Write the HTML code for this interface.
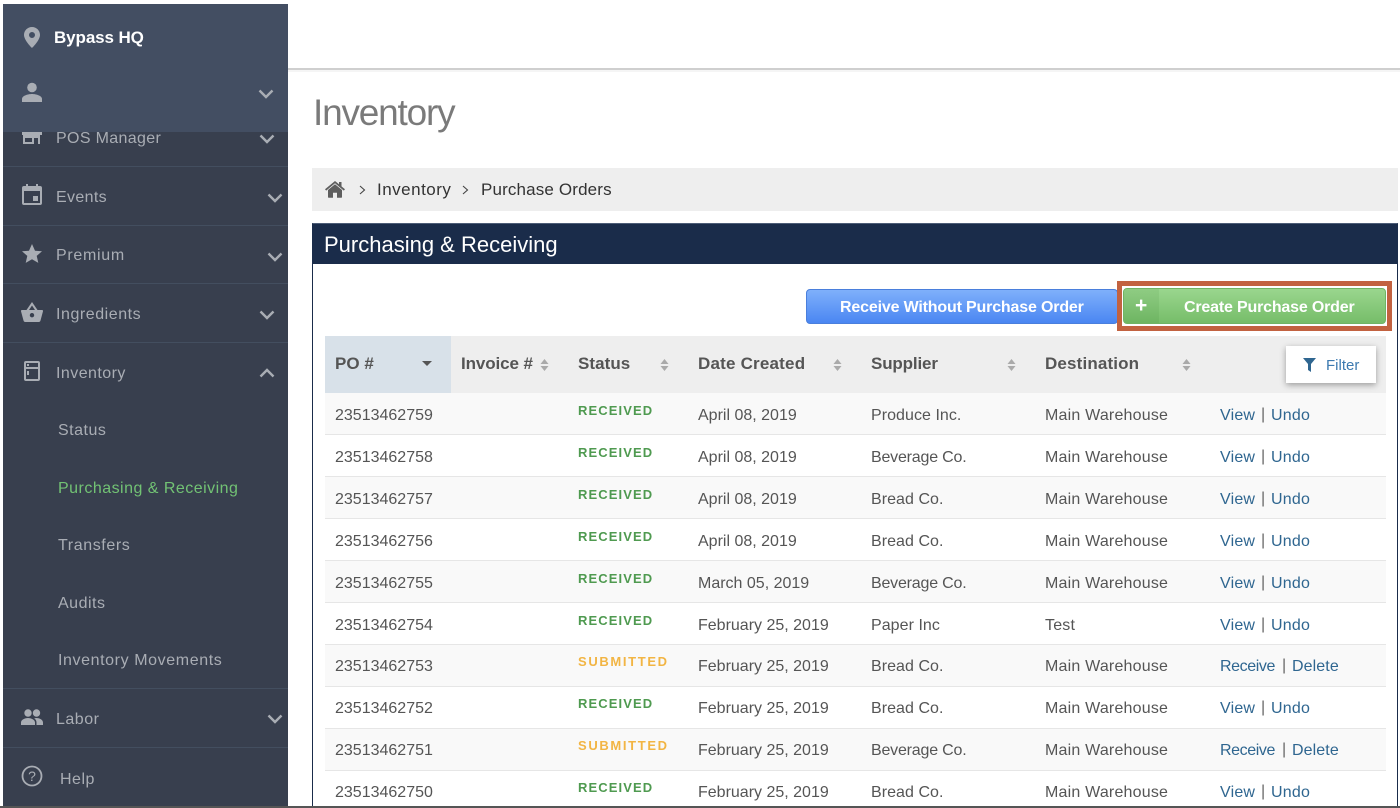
<!DOCTYPE html>
<html><head><meta charset="utf-8"><title>Inventory</title>
<style>
html,body{margin:0;padding:0;background:#fff;width:1400px;height:808px;overflow:hidden}
#p{position:relative;width:1400px;height:808px;overflow:hidden;font-family:"Liberation Sans",sans-serif;color:#555}
.a{position:absolute}
.t{position:absolute;white-space:nowrap;line-height:20px;height:20px}
.s{color:#a9adb4;font-size:16px;letter-spacing:.5px}
.sep{position:absolute;left:3px;width:285px;height:1px;background:#434e5f}
.i{position:absolute;fill:#a9adb4}
.c{position:absolute;fill:none;stroke:#a9adb4;stroke-width:2.4}
.row{position:absolute;left:325px;width:1061px;height:41px;border-bottom:1px solid #e6e6e6}
.odd{background:#f9f9f9}
.n{font-size:16px;color:#555;left:335px}
.dt{font-size:16px;color:#555;left:698px}
.su{font-size:16px;color:#555;left:871px;letter-spacing:.05px}
.de{font-size:16px;color:#555;left:1045px;letter-spacing:.2px}
.st{font-size:13px;font-weight:bold;left:578px}
.g{color:#4f9a50;letter-spacing:1.1px}.o{color:#f2b544;letter-spacing:1.65px}
.l{font-size:16px;color:#2f6690;letter-spacing:.2px}
.v{left:1220px}.u{left:1271px}.b{font-size:16px;color:#666;left:1261px}
.rc{left:1220px;letter-spacing:-.4px}.dl{left:1292px;letter-spacing:.1px}.b2{font-size:16px;color:#666;left:1282px}
.h{font-size:17px;font-weight:bold;color:#555;letter-spacing:.05px}
.ar{position:absolute;width:9px;height:14px}
</style></head><body><div id="p">

<!-- sidebar -->
<div class="a" style="left:3px;top:4px;width:285px;height:802px;background:#383f4e"></div>
<div class="t s" style="left:56px;top:129px;letter-spacing:.35px">POS Manager</div>
<svg class="i" style="left:22px;top:132px" width="20" height="14" viewBox="0 0 20 14"><path d="M0 0h20v3H18v9h-2V6h-4v6H1V3H0zM3 6v4h7V6z"/></svg>
<div class="a" style="left:3px;top:4px;width:285px;height:128px;background:#434e62"></div>
<svg class="i" style="left:24px;top:27px" width="16" height="21" viewBox="0 0 16 21"><path fill-rule="evenodd" d="M8 0C3.600 0 0 3.500 0 7.900 0 13.500 8 21 8 21s8-7.500 8-13.100C16 3.500 12.400 0 8 0zm0 5a3 3 0 1 1 0 6 3 3 0 0 1 0-6z"/></svg>
<div class="t" style="left:54px;top:28px;color:#fff;font-size:17px;font-weight:bold;letter-spacing:-.1px">Bypass HQ</div>
<svg class="i" style="left:22px;top:82px" width="20" height="20" viewBox="0 0 20 20"><circle cx="10" cy="5.500" r="4.800"/><path d="M0 20v-3c0-3.500 6.500-5 10-5s10 1.500 10 5v3z"/></svg>
<svg class="c" style="left:258px;top:88px" width="16" height="12" viewBox="0 0 16 12"><path d="M1.500 2.500 8 9l6.500-6.500"/></svg>
<svg class="c" style="left:259px;top:133px" width="16" height="12" viewBox="0 0 16 12"><path d="M1.500 2.500 8 9l6.500-6.500"/></svg>

<div class="sep" style="top:166px"></div>
<svg class="i" style="left:22px;top:184px" width="20" height="21" viewBox="0 0 20 21"><path fill-rule="evenodd" d="M4 0h2v2h8V0h2v2h2a2 2 0 0 1 2 2v15a2 2 0 0 1-2 2H2a2 2 0 0 1-2-2V4a2 2 0 0 1 2-2h2zM2 7v12h16V7zm9 5h5v5h-5z"/></svg>
<div class="t s" style="left:56px;top:188px;letter-spacing:.35px">Events</div>
<svg class="c" style="left:267px;top:192px" width="16" height="12" viewBox="0 0 16 12"><path d="M1.500 2.500 8 9l6.500-6.500"/></svg>

<div class="sep" style="top:225px"></div>
<svg class="i" style="left:22px;top:244px" width="20" height="19" viewBox="0 0 20 19"><path d="M10 0l3 6.700 7 .6-5.300 4.600 1.600 7L10 15.200 3.700 18.900l1.600-7L0 7.300l7-.6z"/></svg>
<div class="t s" style="left:56px;top:246px;letter-spacing:.7px">Premium</div>
<svg class="c" style="left:267px;top:251px" width="16" height="12" viewBox="0 0 16 12"><path d="M1.500 2.500 8 9l6.500-6.500"/></svg>

<div class="sep" style="top:283px"></div>
<svg class="i" style="left:21px;top:302px" width="22" height="20" viewBox="0 0 22 20"><path fill-rule="evenodd" d="M11 0l5.500 8H21a1 1 0 0 1 1 1.300L19.500 18.500a2 2 0 0 1-2 1.500h-13a2 2 0 0 1-2-1.500L0 9.300A1 1 0 0 1 1 8h4.500zm0 3.500L8 8h6zM11 11a2.200 2.200 0 1 0 0 4.400A2.200 2.200 0 0 0 11 11z"/></svg>
<div class="t s" style="left:56px;top:305px;letter-spacing:.55px">Ingredients</div>
<svg class="c" style="left:259px;top:309px" width="16" height="12" viewBox="0 0 16 12"><path d="M1.500 2.500 8 9l6.500-6.500"/></svg>

<div class="sep" style="top:342px"></div>
<svg class="i" style="left:24px;top:361px" width="16" height="20" viewBox="0 0 16 20"><path fill-rule="evenodd" d="M2 0h12a2 2 0 0 1 2 2v16a2 2 0 0 1-2 2H2a2 2 0 0 1-2-2V2a2 2 0 0 1 2-2zm0 2v4h12V2zm0 6v10h12V8zm1-5h2v2H3zm0 7h2v4H3z"/></svg>
<div class="t s" style="left:56px;top:364px;letter-spacing:.45px">Inventory</div>
<svg class="c" style="left:259px;top:367px" width="16" height="12" viewBox="0 0 16 12"><path d="M1.500 9.500 8 3l6.500 6.500"/></svg>

<div class="t s" style="left:58px;top:421px">Status</div>
<div class="t s" style="left:58px;top:479px;color:#72c274;letter-spacing:.48px">Purchasing &amp; Receiving</div>
<div class="t s" style="left:58px;top:536px;letter-spacing:.6px">Transfers</div>
<div class="t s" style="left:58px;top:594px;letter-spacing:.5px">Audits</div>
<div class="t s" style="left:58px;top:651px;letter-spacing:.6px">Inventory Movements</div>

<div class="sep" style="top:688px"></div>
<svg class="i" style="left:21px;top:709px" width="22" height="16" viewBox="0 0 22 16"><circle cx="7" cy="4" r="3.700"/><circle cx="15.500" cy="4" r="3.700"/><path d="M0 16v-2.500C0 10.500 4.500 9 7 9s7 1.500 7 4.500V16zM15.500 9c2.500 0 6.500 1.500 6.500 4.500V16h-6.500v-2.500c0-1.800-1-3.200-2.300-4.200.9-.2 1.700-.3 2.300-.3z"/></svg>
<div class="t s" style="left:56px;top:710px">Labor</div>
<svg class="c" style="left:267px;top:713px" width="16" height="12" viewBox="0 0 16 12"><path d="M1.500 2.500 8 9l6.500-6.500"/></svg>

<div class="sep" style="top:747px"></div>
<svg class="a" style="left:21px;top:765px" width="22" height="22" viewBox="0 0 22 22"><circle cx="11" cy="11" r="9.500" fill="none" stroke="#a9adb4" stroke-width="1.800"/><text x="11" y="16" text-anchor="middle" font-size="14" fill="#a9adb4" font-family="Liberation Sans">?</text></svg>
<div class="t s" style="left:60px;top:770px">Help</div>

<!-- top bar -->
<div class="a" style="left:288px;top:68px;width:1112px;height:2px;background:#cfcfcf"></div>
<div class="a" style="left:288px;top:70px;width:1112px;height:2px;background:#f5f5f5"></div>
<div class="t" style="left:313px;top:91px;height:44px;line-height:44px;font-size:37px;color:#7a7a7a;letter-spacing:-1.2px">Inventory</div>

<!-- breadcrumb -->
<div class="a" style="left:312px;top:168px;width:1086px;height:43px;background:#eee"></div>
<svg class="a" style="left:325px;top:181px" width="20" height="17" viewBox="0 0 20 17"><path fill="#5e5e5e" d="M10 3.200 3 9v7a.8.8 0 0 0 .8.800H8v-5h4v5h4.200A.8.8 0 0 0 17 16V9zM10 0 0 8.300l1.200 1.300L10 2.300l8.800 7.300L20 8.300 16.500 5.400V1h-2.500v2.300z"/></svg>
<svg class="a" style="left:359px;top:185px" width="7" height="10" viewBox="0 0 7 10"><path d="M1 1l4.500 4L1 9" fill="none" stroke="#444" stroke-width="1.100"/></svg>
<div class="t" style="left:377px;top:180px;font-size:17px;color:#333;letter-spacing:.5px">Inventory</div>
<svg class="a" style="left:462px;top:185px" width="7" height="10" viewBox="0 0 7 10"><path d="M1 1l4.500 4L1 9" fill="none" stroke="#444" stroke-width="1.100"/></svg>
<div class="t" style="left:481px;top:180px;font-size:17px;color:#333;letter-spacing:.15px">Purchase Orders</div>

<!-- panel -->
<div class="a" style="left:312px;top:223px;width:1086px;height:590px;box-sizing:border-box;border:1px solid #1a2c4a;border-top:1px solid #4d5d77"></div>
<div class="a" style="left:312px;top:224px;width:1086px;height:40px;background:#1a2c4a"></div>
<div class="t" style="left:324px;top:234px;font-size:22px;line-height:22px;color:#fff">Purchasing &amp; Receiving</div>

<!-- buttons -->
<div class="a" style="left:806px;top:289px;width:312px;height:35px;box-sizing:border-box;border:1px solid #4a7fdc;border-radius:4px;background:linear-gradient(#7fb0fb,#4a86f2)"></div>
<div class="t" style="left:840px;top:298px;font-size:16px;font-weight:bold;color:#fff;letter-spacing:-.17px">Receive Without Purchase Order</div>
<div class="a" style="left:1117px;top:281px;width:275px;height:50px;box-sizing:border-box;border:5px solid #c26240;background:#fff"></div>
<div class="a" style="left:1123px;top:288px;width:263px;height:36px;box-sizing:border-box;border:1px solid #70b465;border-radius:4px;background:linear-gradient(#9ad68e,#76bd69)"></div>
<div class="a" style="left:1124px;top:289px;width:35px;height:34px;border-radius:3px 0 0 3px;background:linear-gradient(#8fcc83,#6eb562)"></div>
<div class="t" style="left:1135px;top:296px;font-size:21px;font-weight:bold;color:#fff">+</div>
<div class="t" style="left:1184px;top:298px;font-size:16px;font-weight:bold;color:#fff;letter-spacing:-.18px">Create Purchase Order</div>

<!-- table header -->
<div class="a" style="left:325px;top:336px;width:1061px;height:57px;background:#eee"></div>
<div class="a" style="left:325px;top:336px;width:126px;height:57px;background:#d8e1e9"></div>
<div class="t h" style="left:335px;top:354px">PO #</div>
<svg class="a" style="left:422px;top:361px" width="10" height="5" viewBox="0 0 10 5"><path d="M0 0h10L5 5z" fill="#555"/></svg>
<div class="t h" style="left:461px;top:354px;letter-spacing:-.1px">Invoice #</div>
<svg class="ar" style="left:540px;top:358px" viewBox="0 0 9 14"><path d="M4.500 1 8.500 6h-8zM4.500 13 .5 8h8z" fill="#aaa"/></svg>
<div class="t h" style="left:578px;top:354px">Status</div>
<svg class="ar" style="left:660px;top:358px" viewBox="0 0 9 14"><path d="M4.500 1 8.500 6h-8zM4.500 13 .5 8h8z" fill="#aaa"/></svg>
<div class="t h" style="left:698px;top:354px;letter-spacing:.2px">Date Created</div>
<svg class="ar" style="left:833px;top:358px" viewBox="0 0 9 14"><path d="M4.500 1 8.500 6h-8zM4.500 13 .5 8h8z" fill="#aaa"/></svg>
<div class="t h" style="left:871px;top:354px;letter-spacing:-.15px">Supplier</div>
<svg class="ar" style="left:1007px;top:358px" viewBox="0 0 9 14"><path d="M4.500 1 8.500 6h-8zM4.500 13 .5 8h8z" fill="#aaa"/></svg>
<div class="t h" style="left:1045px;top:354px;letter-spacing:.15px">Destination</div>
<svg class="ar" style="left:1182px;top:358px" viewBox="0 0 9 14"><path d="M4.500 1 8.500 6h-8zM4.500 13 .5 8h8z" fill="#aaa"/></svg>

<div class="a" style="left:1286px;top:346px;width:90px;height:37px;background:#fff;box-shadow:0 2px 6px rgba(0,0,0,.35)"></div>
<svg class="a" style="left:1303px;top:358px" width="13" height="14" viewBox="0 0 13 14"><path d="M0 0h13L8 6v8L5 12V6z" fill="#2f6690"/></svg>
<div class="t" style="left:1326px;top:356px;font-size:15px;color:#3d7ab0">Filter</div>

<!-- rows -->
<div class="row odd" style="top:393px"></div>
<div class="row" style="top:435px"></div>
<div class="row odd" style="top:477px"></div>
<div class="row" style="top:519px"></div>
<div class="row odd" style="top:561px"></div>
<div class="row" style="top:603px"></div>
<div class="row odd" style="top:645px"></div>
<div class="row" style="top:687px"></div>
<div class="row odd" style="top:729px"></div>

<div class="t n" style="top:406px">23513462759</div><div class="t st g" style="top:401px">RECEIVED</div><div class="t dt" style="top:406px">April 08, 2019</div><div class="t su" style="top:406px">Produce Inc.</div><div class="t de" style="top:406px">Main Warehouse</div><div class="t l v" style="top:406px">View</div><div class="t b" style="top:405px">|</div><div class="t l u" style="top:406px">Undo</div>
<div class="t n" style="top:448px">23513462758</div><div class="t st g" style="top:443px">RECEIVED</div><div class="t dt" style="top:448px">April 08, 2019</div><div class="t su" style="top:448px;letter-spacing:-.2px">Beverage Co.</div><div class="t de" style="top:448px">Main Warehouse</div><div class="t l v" style="top:448px">View</div><div class="t b" style="top:447px">|</div><div class="t l u" style="top:448px">Undo</div>
<div class="t n" style="top:490px">23513462757</div><div class="t st g" style="top:485px">RECEIVED</div><div class="t dt" style="top:490px">April 08, 2019</div><div class="t su" style="top:490px">Bread Co.</div><div class="t de" style="top:490px">Main Warehouse</div><div class="t l v" style="top:490px">View</div><div class="t b" style="top:489px">|</div><div class="t l u" style="top:490px">Undo</div>
<div class="t n" style="top:532px">23513462756</div><div class="t st g" style="top:527px">RECEIVED</div><div class="t dt" style="top:532px">April 08, 2019</div><div class="t su" style="top:532px">Bread Co.</div><div class="t de" style="top:532px">Main Warehouse</div><div class="t l v" style="top:532px">View</div><div class="t b" style="top:531px">|</div><div class="t l u" style="top:532px">Undo</div>
<div class="t n" style="top:574px">23513462755</div><div class="t st g" style="top:569px">RECEIVED</div><div class="t dt" style="top:574px">March 05, 2019</div><div class="t su" style="top:574px;letter-spacing:-.2px">Beverage Co.</div><div class="t de" style="top:574px">Main Warehouse</div><div class="t l v" style="top:574px">View</div><div class="t b" style="top:573px">|</div><div class="t l u" style="top:574px">Undo</div>
<div class="t n" style="top:616px">23513462754</div><div class="t st g" style="top:611px">RECEIVED</div><div class="t dt" style="top:616px">February 25, 2019</div><div class="t su" style="top:616px">Paper Inc</div><div class="t de" style="top:616px">Test</div><div class="t l v" style="top:616px">View</div><div class="t b" style="top:615px">|</div><div class="t l u" style="top:616px">Undo</div>
<div class="t n" style="top:657px">23513462753</div><div class="t st o" style="top:652px">SUBMITTED</div><div class="t dt" style="top:657px">February 25, 2019</div><div class="t su" style="top:657px">Bread Co.</div><div class="t de" style="top:657px">Main Warehouse</div><div class="t l rc" style="top:657px">Receive</div><div class="t b2" style="top:656px">|</div><div class="t l dl" style="top:657px">Delete</div>
<div class="t n" style="top:699px">23513462752</div><div class="t st g" style="top:694px">RECEIVED</div><div class="t dt" style="top:699px">February 25, 2019</div><div class="t su" style="top:699px">Bread Co.</div><div class="t de" style="top:699px">Main Warehouse</div><div class="t l v" style="top:699px">View</div><div class="t b" style="top:698px">|</div><div class="t l u" style="top:699px">Undo</div>
<div class="t n" style="top:741px">23513462751</div><div class="t st o" style="top:736px">SUBMITTED</div><div class="t dt" style="top:741px">February 25, 2019</div><div class="t su" style="top:741px;letter-spacing:-.2px">Beverage Co.</div><div class="t de" style="top:741px">Main Warehouse</div><div class="t l rc" style="top:741px">Receive</div><div class="t b2" style="top:740px">|</div><div class="t l dl" style="top:741px">Delete</div>
<div class="t n" style="top:783px">23513462750</div><div class="t st g" style="top:778px">RECEIVED</div><div class="t dt" style="top:783px">February 25, 2019</div><div class="t su" style="top:783px">Bread Co.</div><div class="t de" style="top:783px">Main Warehouse</div><div class="t l v" style="top:783px">View</div><div class="t b" style="top:782px">|</div><div class="t l u" style="top:783px">Undo</div>

<div class="a" style="left:0;top:806px;width:1400px;height:2px;background:#555"></div>
</div></body></html>
